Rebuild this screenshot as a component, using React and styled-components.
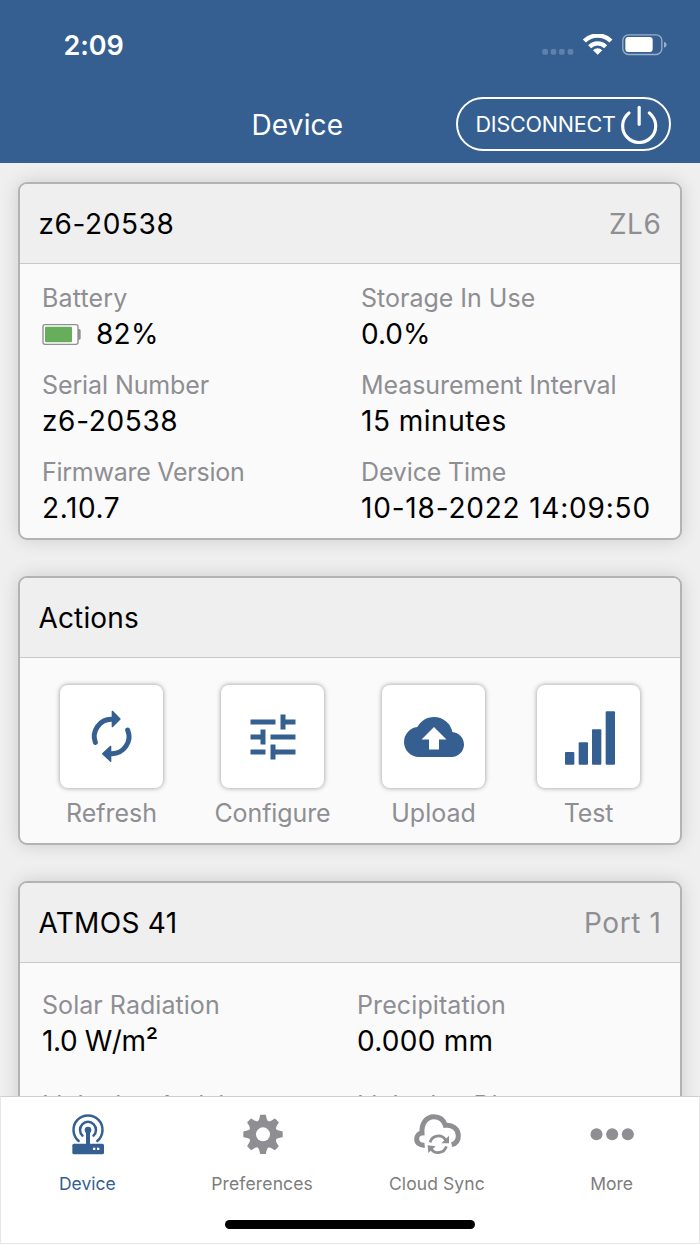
import React from "react";
import styled, { createGlobalStyle } from "styled-components";
import { MdTune, MdCloudUpload } from "react-icons/md";

const GlobalStyle = createGlobalStyle`
  * {
    box-sizing: border-box;
  }
  body {
    margin: 0;
    font-family: Inter, "Liberation Sans", sans-serif;
    color: #000;
  }
  svg {
    display: block;
    flex: none;
  }
`

const Screen = styled.div`
  width: 700px;
  height: 1244px;
  display: flex;
  flex-direction: column;
  overflow: hidden;
  background: #efefef;
`

const Header = styled.header`
  flex: none;
  height: 163px;
  background: #355f90;
  color: #fff;
`

const StatusBar = styled.div`
  height: 85px;
  padding: 4px 33px 0 63.5px;
  display: flex;
  align-items: center;
  justify-content: space-between;
`

const Clock = styled.span`
  padding-top: 2px;
  font-size: 27px;
  font-weight: 600;
  letter-spacing: -0.1px;
  line-height: 34px;
`

const NavBar = styled.div`
  height: 78px;
  padding: 0 29px 0 251.5px;
  display: flex;
  align-items: center;
  justify-content: space-between;
`

const Title = styled.h1`
  margin: 0;
  padding-top: 1px;
  font-size: 28px;
  font-weight: 400;
  letter-spacing: 0.15px;
`

const DisconnectButton = styled.button`
  width: 215px;
  height: 54px;
  padding: 0 11.5px 0 17.5px;
  display: flex;
  align-items: center;
  justify-content: space-between;
  border: 2px solid #fff;
  border-radius: 27px;
  background: none;
  color: #fff;
  font: 400 21.5px Inter, sans-serif;
  letter-spacing: -0.2px;
`

const Content = styled.main`
  flex: 1;
  min-height: 0;
  padding: 19px 18px 0;
  display: flex;
  flex-direction: column;
  gap: 36px;
  overflow: hidden;
`

const Card = styled.section`
  flex: none;
  height: ${(p) => p.$height}px;
  border: 2px solid #b3b3b3;
  border-radius: 9px;
  background: #fafafa;
  box-shadow: 0 0 18px rgba(0, 0, 0, 0.14);
  overflow: hidden;
`

const CardHeader = styled.div`
  height: 80px;
  padding: 0 18.5px;
  display: flex;
  align-items: center;
  justify-content: space-between;
  border-bottom: 1px solid #c8c8c8;
  background: #efefef;
  font-size: 28px;
`

const Txt = styled.span`
  letter-spacing: ${(p) => p.$ls || 0}px;
  color: ${(p) => (p.$muted ? "#8e8e93" : "inherit")};
`

const Fields = styled.dl`
  margin: 0;
  padding: ${(p) => p.$top}px 0 0 22px;
  display: grid;
  grid-template-columns: ${(p) => p.$first}px 1fr;
  row-gap: ${(p) => p.$gap}px;
`

const Label = styled.dt`
  color: #8e8e93;
  font-size: 25px;
  line-height: 30px;
  white-space: nowrap;
  letter-spacing: ${(p) => p.$ls || 0}px;
`

const Value = styled.dd`
  margin: 0;
  display: flex;
  align-items: center;
  gap: 15px;
  font-size: 28px;
  line-height: 43px;
  white-space: nowrap;
  letter-spacing: ${(p) => p.$ls || 0}px;
`

const Actions = styled.div`
  padding: 27px 0 0 40px;
  display: flex;
  gap: 52px;
`

const Action = styled.div`
  width: ${(p) => p.$width || 103}px;
  display: flex;
  flex-direction: column;
  align-items: center;
  gap: 10px;
`

const Tile = styled.button`
  width: 103px;
  height: 103px;
  padding: 0;
  display: flex;
  align-items: center;
  justify-content: center;
  border: 0;
  border-radius: 8px;
  background: #fff;
  color: #355f90;
  box-shadow: 0 0 5px rgba(0, 0, 0, 0.4);
`

const TabBar = styled.nav`
  flex: none;
  height: 148px;
  border: 1px solid #e6e6e6;
  border-top-color: #cfcfcf;
  background: #fff;
`

const Tabs = styled.div`
  height: 123px;
  margin-left: -1px;
  padding-top: 13px;
  display: grid;
  grid-template-columns: repeat(4, 1fr);
`

const Tab = styled.div`
  display: flex;
  flex-direction: column;
  align-items: center;
  color: ${(p) => (p.$active ? "#355f90" : "#8e8e93")};
`

const TabLabel = styled.span`
  margin-top: 14px;
  color: ${(p) => (p.$active ? "#355f90" : "#7d7d7d")};
  font-size: 17.5px;
  line-height: 24px;
  letter-spacing: ${(p) => p.$ls || 0}px;
`

const HomeIndicator = styled.div`
  width: 250px;
  height: 9px;
  margin: 0 auto;
  border-radius: 5px;
  background: #000;
`

const StatusIcons = () => (
  <svg width="125" height="22" viewBox="0 0 375 66">
    <g fill="#fff" fillOpacity="0.22">
      <rect x="1" y="45" width="17" height="17" rx="5" />
      <rect x="26" y="45" width="17" height="17" rx="5" />
      <rect x="51" y="45" width="17" height="17" rx="5" />
      <rect x="77" y="45" width="17" height="17" rx="5" />
    </g>
    <g fill="none" stroke="#fff" strokeWidth="13">
      <path d="M127 21 A57 57 0 0 1 207 21" />
      <path d="M143 38 A34 34 0 0 1 191 38" />
    </g>
    <path d="M167 62 L153 49 A19 19 0 0 1 181 49 Z" fill="#fff" />
    <rect x="242.500" y="2.500" width="117" height="59" rx="17" fill="none" stroke="#fff" strokeOpacity="0.5" strokeWidth="4" />
    <rect x="250" y="9" width="82" height="45" rx="9" fill="#fff" />
    <path d="M366 23 Q374 26 374 32 Q374 38 366 41 Z" fill="#fff" fillOpacity="0.5" />
  </svg>
)

const PowerIcon = () => (
  <svg width="38" height="39" viewBox="0 0 114 117" fill="none" stroke="currentColor" strokeWidth="9.500" strokeLinecap="round">
    <path d="M27 24 A49.500 49.500 0 1 0 88 24" />
    <path d="M57.500 7 V58" />
  </svg>
)

const BatteryIcon = () => (
  <svg width="39" height="21" viewBox="0 0 117 63">
    <rect x="3" y="2" width="105" height="59" rx="6" fill="#fff" stroke="#8e8e93" strokeWidth="4" />
    <rect x="9" y="8" width="81" height="47" rx="3" fill="#67ad5b" />
    <path d="M108 15 h4 q4 0 4 5 v22 q0 5 -4 5 h-4 z" fill="#8e8e93" />
  </svg>
)

const RefreshIcon = () => (
  <svg width="103" height="103" viewBox="0 0 309 309" fill="none" stroke="currentColor" strokeLinecap="round" strokeLinejoin="round">
    <path strokeWidth="15" d="M106 172 A51.500 51.500 0 0 1 156 103" />
    <path strokeWidth="15" d="M203 135 A51.500 51.500 0 0 1 153 206" />
    <path strokeWidth="4" fill="currentColor" d="M157 79 L180 102 L157 125 Z M152 184 L128 206 L152 229 Z" />
  </svg>
)

const SignalIcon = () => (
  <svg width="103" height="103" viewBox="0 0 309 309" fill="currentColor">
    <rect x="84" y="201" width="28" height="38" rx="3" />
    <rect x="125" y="172" width="28" height="67" rx="3" />
    <rect x="165" y="133" width="28" height="106" rx="3" />
    <rect x="206" y="79" width="28" height="160" rx="3" />
  </svg>
)

const DeviceIcon = () => (
  <svg width="48" height="48" viewBox="0 0 144 144">
    <rect x="28" y="101" width="95" height="32" rx="5" fill="currentColor" />
    <rect x="69" y="60" width="12" height="45" fill="currentColor" />
    <circle cx="75" cy="60" r="10" fill="currentColor" />
    <g fill="none" stroke="currentColor" strokeWidth="7.500" strokeLinecap="round">
      <path d="M47 93 A43.500 43.500 0 1 1 103 93" />
      <path d="M58.500 77 A24 24 0 1 1 91.500 77" />
    </g>
    <rect x="90" y="113" width="7" height="7" fill="#fff" />
    <rect x="102" y="113" width="7" height="7" fill="#fff" />
  </svg>
)

const GearIcon = () => (
  <svg width="48" height="48" viewBox="0 0 144 144" fill="currentColor" stroke="currentColor" strokeWidth="4" strokeLinejoin="round">
    {[0, 45, 90, 135, 180, 225, 270, 315].map((a) => (
      <path key={a} d="M57 36 Q64 31 66 15 H80 Q82 31 89 36 L73 60 Z" transform={`translate(2 1) rotate(${a} 73 72)`} />
    ))}
    <circle cx="75" cy="73" r="37" />
    <circle cx="75" cy="73" r="21" fill="#fff" stroke="none" />
  </svg>
)

const CloudSyncIcon = () => (
  <svg width="48" height="48" viewBox="0 0 144 144" fill="none" stroke="currentColor">
    <path strokeWidth="15" d="M35 105.500 C20 107 11 98 11 87 C11 77 18 70 27 69 C25 40 40 20 63 20 C80 20 92 30 97 46 C118 43 136 57 136 77 C136 91 128 101 116 104" />
    <path strokeWidth="8.500" d="M51 97 A26 26 0 0 1 98 90" />
    <path strokeWidth="8.500" d="M100 109 A26 26 0 0 1 54 117" />
    <path stroke="none" fill="currentColor" d="M108 77 V100 H85 Z M44 106 L68 109 L46 129 Z" />
  </svg>
)

const MoreIcon = () => (
  <svg width="48" height="48" viewBox="0 0 144 144" fill="currentColor">
    <circle cx="25.500" cy="73" r="18" />
    <circle cx="72.500" cy="73" r="18" />
    <circle cx="119.500" cy="73" r="18" />
  </svg>
)

const Field = ({ label, value, icon, ls, vls }) => (
  <div>
    <Label $ls={ls}>{label}</Label>
    {value && (
      <Value $ls={vls}>
        {icon}
        <span>{value}</span>
      </Value>
    )}
  </div>
)

const App = () => {
  return (
    <Screen>
      <GlobalStyle />
      <Header>
        <StatusBar>
          <Clock>2:09</Clock>
          <StatusIcons />
        </StatusBar>
        <NavBar>
          <Title>Device</Title>
          <DisconnectButton>
            DISCONNECT
            <PowerIcon />
          </DisconnectButton>
        </NavBar>
      </Header>

      <Content>
        <Card $height={358}>
          <CardHeader>
            <Txt $ls={0.6}>z6-20538</Txt>
            <Txt $muted $ls={0.6}>ZL6</Txt>
          </CardHeader>
          <Fields $top={19} $first={319} $gap={14}>
            <Field label="Battery" value="82%" icon={<BatteryIcon />} ls={0.15} vls={0.3} />
            <Field label="Storage In Use" value="0.0%" />
            <Field label="Serial Number" value="z6-20538" ls={-0.1} vls={0.65} />
            <Field label="Measurement Interval" value="15 minutes" ls={-0.09} vls={0.5} />
            <Field label="Firmware Version" value="2.10.7" ls={-0.26} vls={0.6} />
            <Field label="Device Time" value="10-18-2022 14:09:50" ls={-0.15} vls={0.8} />
          </Fields>
        </Card>

        <Card $height={269}>
          <CardHeader>
            <Txt $ls={0.15}>Actions</Txt>
          </CardHeader>
          <Actions>
            <Action>
              <Tile><RefreshIcon /></Tile>
              <Label as="span">Refresh</Label>
            </Action>
            <Action $width={115}>
              <Tile><MdTune size={60} /></Tile>
              <Label as="span" $ls={-0.1}>Configure</Label>
            </Action>
            <Action>
              <Tile><MdCloudUpload size={60} /></Tile>
              <Label as="span">Upload</Label>
            </Action>
            <Action>
              <Tile><SignalIcon /></Tile>
              <Label as="span" $ls={-0.2}>Test</Label>
            </Action>
          </Actions>
        </Card>

        <Card $height={400}>
          <CardHeader>
            <Txt $ls={0.3}>ATMOS 41</Txt>
            <Txt $muted $ls={0.6}>Port 1</Txt>
          </CardHeader>
          <Fields $top={27} $first={315} $gap={27}>
            <Field label="Solar Radiation" value="1.0 W/m²" ls={0.05} vls={-0.4} />
            <Field label="Precipitation" value="0.000 mm" ls={0.1} vls={0.25} />
            <Field label="Lightning Activity" />
            <Field label="Lightning Distance" />
          </Fields>
        </Card>
      </Content>

      <TabBar>
        <Tabs>
          <Tab $active>
            <DeviceIcon />
            <TabLabel $active>Device</TabLabel>
          </Tab>
          <Tab>
            <GearIcon />
            <TabLabel $ls={0.15}>Preferences</TabLabel>
          </Tab>
          <Tab>
            <CloudSyncIcon />
            <TabLabel $ls={0.1}>Cloud Sync</TabLabel>
          </Tab>
          <Tab>
            <MoreIcon />
            <TabLabel>More</TabLabel>
          </Tab>
        </Tabs>
        <HomeIndicator />
      </TabBar>
    </Screen>
  )
}

export default App
